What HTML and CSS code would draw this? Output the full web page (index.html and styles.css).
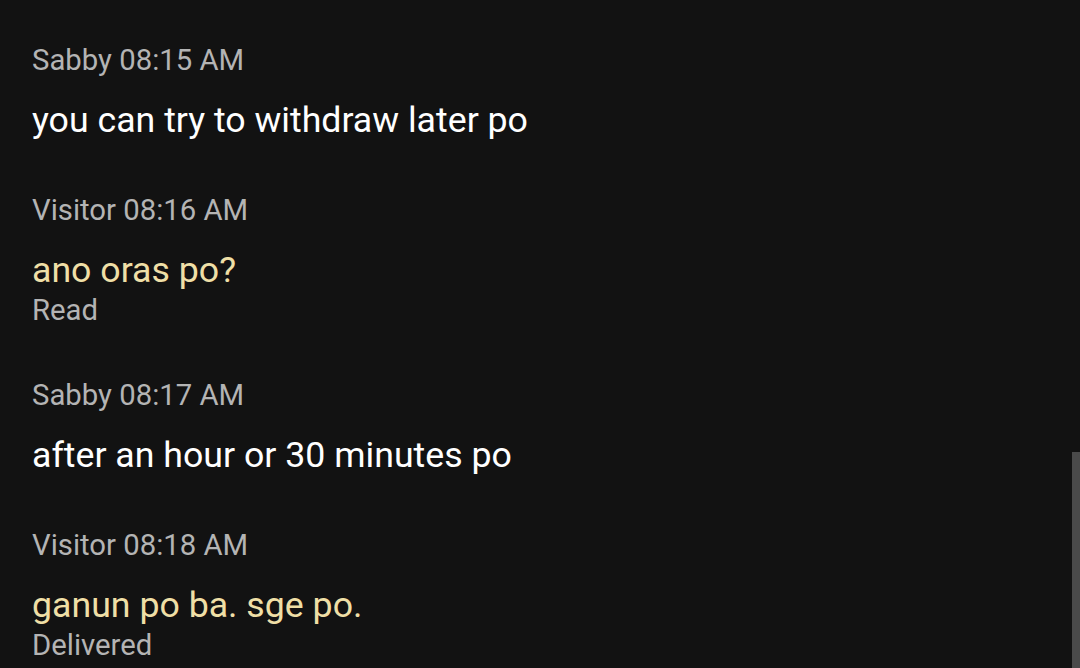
FILE: index.html
```html
<!DOCTYPE html>
<html lang="en">
<head>
    <meta charset="UTF-8">
    <meta name="viewport" content="width=device-width, initial-scale=1.0">
    <title>Chat</title>
    <link rel="stylesheet" href="styles.css">
</head>
<body>
    <div class="chat">
        <div class="msg">
            <div class="meta">Sabby 08:15 AM</div>
            <div class="text">you can try to withdraw later po</div>
        </div>

        <div class="msg visitor">
            <div class="meta">Visitor 08:16 AM</div>
            <div class="text">ano oras po?</div>
            <div class="status">Read</div>
        </div>

        <div class="msg">
            <div class="meta">Sabby 08:17 AM</div>
            <div class="text">after an hour or 30 minutes po</div>
        </div>

        <div class="msg visitor">
            <div class="meta">Visitor 08:18 AM</div>
            <div class="text">ganun po ba. sge po.</div>
            <div class="status">Delivered</div>
        </div>
    </div>

    <div class="scrollbar"></div>
</body>
</html>
```

FILE: styles.css
```css
*{
    margin: 0;
    padding: 0;
    box-sizing: border-box;
}

body{
    background-color: #121212;
    font-family: Roboto, "Noto Sans", sans-serif;
    height: 100vh;
    overflow: hidden;
}

.chat{
    padding: 42px 32px 0;
    display: flex;
    flex-direction: column;
    gap: 49px;
}

.meta{
    color: #b4b4b4;
    font-size: 29.3px;
    line-height: 36px;
    margin-bottom: 19px;
}

.text{
    color: #ffffff;
    font-size: 35.7px;
    line-height: 46px;
}

.visitor .text{
    color: #efdfa6;
}

.status{
    color: #b4b4b4;
    font-size: 29.3px;
    line-height: 35px;
}

.scrollbar{
    position: absolute;
    right: 0;
    top: 452px;
    width: 8px;
    height: 216px;
    background-color: #4a4a4a;
}
```
